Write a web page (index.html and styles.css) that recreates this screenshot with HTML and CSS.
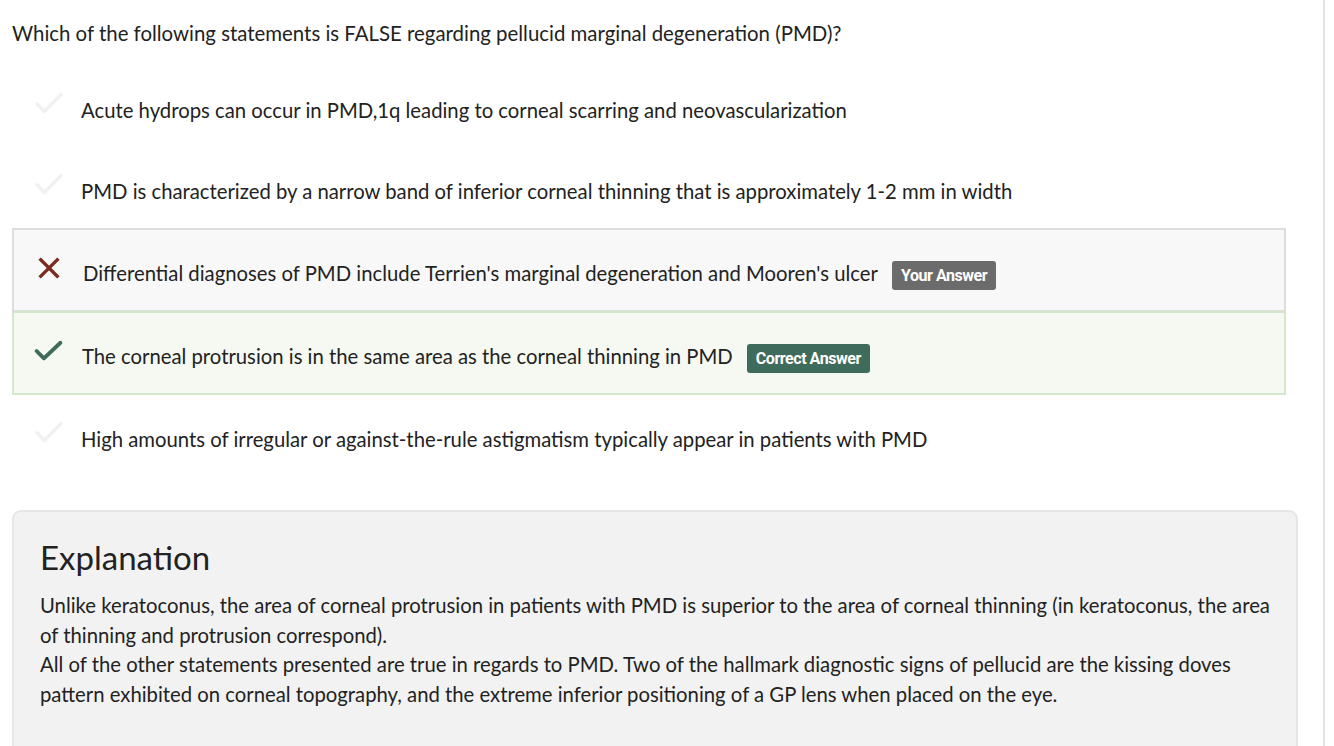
FILE: index.html
```html
<!DOCTYPE html>
<html lang="en">
<head>
<meta charset="utf-8">
<title>Question</title>
<link rel="stylesheet" href="styles.css">
</head>
<body>
<div class="page">
  <main class="quiz">
    <p class="question">Which of the following statements is FALSE regarding pellucid marginal degeneration (PMD)?</p>
    <ul class="options">
      <li class="option">
        <span class="icon icon-faint"><svg viewBox="0 0 32 24" width="30" height="22"><path d="M3 13 L11 21 L29 3" fill="none" stroke="currentColor" stroke-width="4" stroke-linecap="round" stroke-linejoin="round"/></svg></span>
        <span class="text">Acute hydrops can occur in PMD,1q leading to corneal scarring and neovascularization</span>
      </li>
      <li class="option">
        <span class="icon icon-faint"><svg viewBox="0 0 32 24" width="30" height="22"><path d="M3 13 L11 21 L29 3" fill="none" stroke="currentColor" stroke-width="4" stroke-linecap="round" stroke-linejoin="round"/></svg></span>
        <span class="text">PMD is characterized by a narrow band of inferior corneal thinning that is approximately 1-2 mm in width</span>
      </li>
      <li class="option option-wrong">
        <span class="icon icon-wrong"><svg viewBox="0 0 24 24" width="22" height="22"><path d="M3 3 L21 21 M21 3 L3 21" fill="none" stroke="currentColor" stroke-width="3.6" stroke-linecap="square"/></svg></span>
        <span class="text">Differential diagnoses of PMD include Terrien's marginal degeneration and Mooren's ulcer</span>
        <span class="badge badge-yours">Your Answer</span>
      </li>
      <li class="option option-correct">
        <span class="icon icon-correct"><svg viewBox="0 0 32 24" width="31" height="22"><path d="M3 12 L11 20 L29 3" fill="none" stroke="currentColor" stroke-width="4.2" stroke-linecap="round" stroke-linejoin="round"/></svg></span>
        <span class="text">The corneal protrusion is in the same area as the corneal thinning in PMD</span>
        <span class="badge badge-correct">Correct Answer</span>
      </li>
      <li class="option">
        <span class="icon icon-faint"><svg viewBox="0 0 32 24" width="30" height="22"><path d="M3 13 L11 21 L29 3" fill="none" stroke="currentColor" stroke-width="4" stroke-linecap="round" stroke-linejoin="round"/></svg></span>
        <span class="text">High amounts of irregular or against-the-rule astigmatism typically appear in patients with PMD</span>
      </li>
    </ul>
    <section class="explanation">
      <h2 class="explanation-title">Explanation</h2>
      <p class="explanation-body">Unlike keratoconus, the area of corneal protrusion in patients with PMD is superior to the area of corneal thinning (in keratoconus, the area of thinning and protrusion correspond).<br>All of the other statements presented are true in regards to PMD. Two of the hallmark diagnostic signs of pellucid are the kissing doves pattern exhibited on corneal topography, and the extreme inferior positioning of a GP lens when placed on the eye.</p>
    </section>
  </main>
  <div class="side"></div>
</div>
</body>
</html>
```

FILE: styles.css
```css
html, body {
  margin: 0;
  padding: 0;
  background: #ffffff;
}

body {
  font-family: Lato, "Open Sans", sans-serif;
  color: #222222;
  overflow: hidden;
}

.page {
  display: flex;
  height: 746px;
  overflow: hidden;
}

.quiz {
  width: 1298px;
  box-sizing: border-box;
  padding-left: 12px;
  flex: none;
}

.side {
  width: 2px;
  margin-left: 25px;
  background: #e2e2e2;
  height: 100%;
}

.question {
  margin: 0;
  padding-top: 20px;
  font-size: 20.4px;
  line-height: 26px;
}

.options {
  list-style: none;
  margin: 0;
  padding: 0;
  width: 1274px;
  margin-top: 20px;
}

.option {
  display: flex;
  align-items: center;
  height: 81px;
  box-sizing: border-box;
  padding: 6px 0 0 21px;
  border: 1px solid transparent;
  font-size: 20.3px;
}

.option-wrong {
  background: #f8f8f8;
  border: 2px solid #dddddd;
  border-bottom-width: 1px;
  height: 83px;
}

.option-correct {
  background: #f5f9f1;
  border: 2px solid #d5e7cb;
  height: 84px;
  padding-top: 6px;
}

.icon {
  width: 47px;
  flex: none;
  display: flex;
  align-items: center;
  margin-top: -14px;
}

.icon-faint { color: #f1f1f1; }
.icon-wrong { color: #7b2b1f; margin-top: -10px; padding-left: 3px; width: 45px; }
.icon-correct { color: #3e6b5b; margin-top: -10px; margin-left: -2px; width: 49px; }

.text {
  white-space: nowrap;
}

.badge {
  margin-left: 14px;
  font-family: Roboto, "Liberation Sans", sans-serif;
  font-weight: 700;
  font-size: 16px;
  letter-spacing: -0.45px;
  color: #ffffff;
  border-radius: 3px;
  padding: 0 9px;
  height: 29px;
  line-height: 29px;
  margin-top: 4px;
}

.badge-yours { background: #6b6b6b; }
.badge-correct { background: #3e6b5b; }

.explanation {
  margin-top: 34px;
  background: #f2f2f2;
  border: 2px solid #e6e6e6;
  border-radius: 9px;
  padding: 24px 26px 40px 26px;
  height: 300px;
}

.explanation-title {
  margin: 0;
  font-weight: 400;
  font-size: 33px;
  line-height: 42px;
  color: #222222;
}

.explanation-body {
  margin: 13px 0 0 0;
  font-size: 20.3px;
  line-height: 29.6px;
}
```
